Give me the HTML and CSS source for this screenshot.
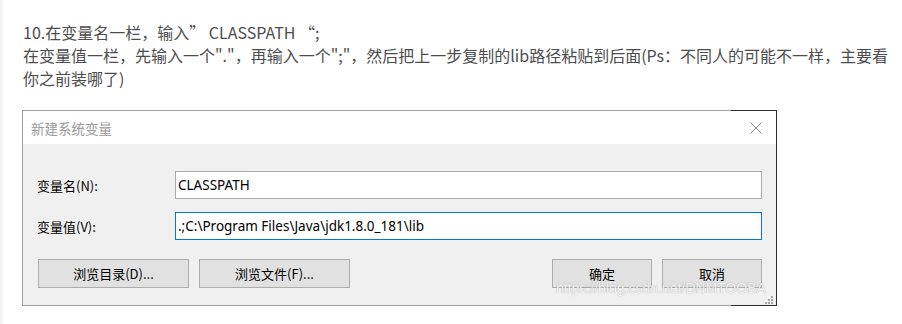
FILE: index.html
```html
<!DOCTYPE html>
<html lang="zh-CN">
<head>
<meta charset="utf-8">
<title>新建系统变量</title>
<link rel="stylesheet" href="styles.css">
</head>
<body>
<div class="page">
  <p class="para">10.在变量名一栏，输入” CLASSPATH “;<br>在变量值一栏，先输入一个"."，再输入一个";"，然后把上一步复制的lib路径粘贴到后面(Ps：不同人的可能不一样，主要看<br>你之前装哪了)</p>
  <div class="dialog">
    <div class="titlebar">
      <span class="title">新建系统变量</span>
      <svg class="close" width="12" height="12" viewBox="0 0 12 12"><path d="M0.5 0.5 L11.5 11.5 M11.5 0.5 L0.5 11.5" stroke="#8a8a8a" stroke-width="1" fill="none"/></svg>
    </div>
    <div class="body">
      <div class="row">
        <span class="label">变量名(N):</span>
        <div class="input">CLASSPATH</div>
      </div>
      <div class="row row2">
        <span class="label">变量值(V):</span>
        <div class="input focus">.;C:\Program Files\Java\jdk1.8.0_181\lib</div>
      </div>
      <div class="buttons">
        <div class="btn wide">浏览目录(D)...</div>
        <div class="btn wide">浏览文件(F)...</div>
        <div class="spacer"></div>
        <div class="btn">确定</div>
        <div class="btn">取消</div>
      </div>
    </div>
    <span class="watermark">https://blog.csdn.net/DNMTOOBA</span>
    <svg class="grip" width="10" height="10" viewBox="0 0 10 10"><g fill="#a8a8a8"><rect x="8" y="2" width="2" height="2"/><rect x="5" y="5" width="2" height="2"/><rect x="8" y="5" width="2" height="2"/><rect x="2" y="8" width="2" height="2"/><rect x="5" y="8" width="2" height="2"/><rect x="8" y="8" width="2" height="2"/></g></svg>
  </div>
</div>
</body>
</html>
```
FILE: styles.css
```css
html, body {
  margin: 0;
  padding: 0;
  background: #ffffff;
}
.page {
  border-left: 3px solid #f4f4f4;
  height: 324px;
  box-sizing: border-box;
  padding-top: 21px;
}
.para {
  margin: 0 0 0 20px;
  font-family: "Microsoft YaHei", "Noto Sans CJK SC", "Noto Sans", sans-serif;
  font-size: 16px;
  line-height: 23px;
  color: #4d4d4d;
  white-space: nowrap;
}
.dialog {
  position: relative;
  margin: 20px 0 0 19px;
  width: 755px;
  box-sizing: border-box;
  border-left: 1px solid #a0a0a0;
  border-right: 1px solid #2e2e2e;
  padding: 1px 0;
  background:
    linear-gradient(to right, #a0a0a0 708px, #2e2e2e 708px) top / 100% 1px no-repeat,
    linear-gradient(to right, #a0a0a0 708px, #2e2e2e 708px) bottom / 100% 1px no-repeat,
    #f0f0f0;
  font-family: "Microsoft YaHei", "Noto Sans CJK SC", "Noto Sans", sans-serif;
  font-size: 13px;
  color: #000;
}
.titlebar {
  height: 33px;
  background: #fff;
  display: flex;
  align-items: center;
  justify-content: space-between;
  padding: 0 14px 0 8px;
}
.title {
  color: #9a9a9a;
  font-size: 13.5px;
}
.close {
  display: block;
  margin-top: 1px;
}
.body {
  padding: 27px 14px 17px 14px;
}
.row {
  display: flex;
  align-items: center;
}
.row2 {
  margin-top: 13px;
}
.label {
  width: 138px;
  flex: none;
  font-size: 13px;
}
.input {
  flex: 1;
  height: 28px;
  box-sizing: border-box;
  border: 1px solid #acacac;
  background: #fff;
  padding: 0 0 0 2px;
  display: flex;
  align-items: center;
  font-family: "Segoe UI", "Noto Sans", "Noto Sans CJK SC", sans-serif;
  font-size: 13.5px;
}
.input.focus {
  border-color: #0078d7;
}
.buttons {
  display: flex;
  gap: 10px;
  margin-top: 19px;
  padding-left: 1px;
}
.spacer {
  flex: 1;
}
.btn {
  width: 100px;
  height: 29px;
  box-sizing: border-box;
  border: 1px solid #adadad;
  background: #e1e1e1;
  display: flex;
  align-items: center;
  justify-content: center;
  font-size: 13px;
}
.btn.wide {
  width: 151px;
}
.watermark {
  position: absolute;
  left: 533px;
  top: 170px;
  font-family: "Liberation Sans", Arial, sans-serif;
  font-size: 14px;
  color: rgba(255, 255, 255, 0.9);
  text-shadow: 0 0 1px rgba(110, 110, 110, 0.7);
  white-space: nowrap;
}
.grip {
  position: absolute;
  right: 3px;
  bottom: 2px;
}
```
